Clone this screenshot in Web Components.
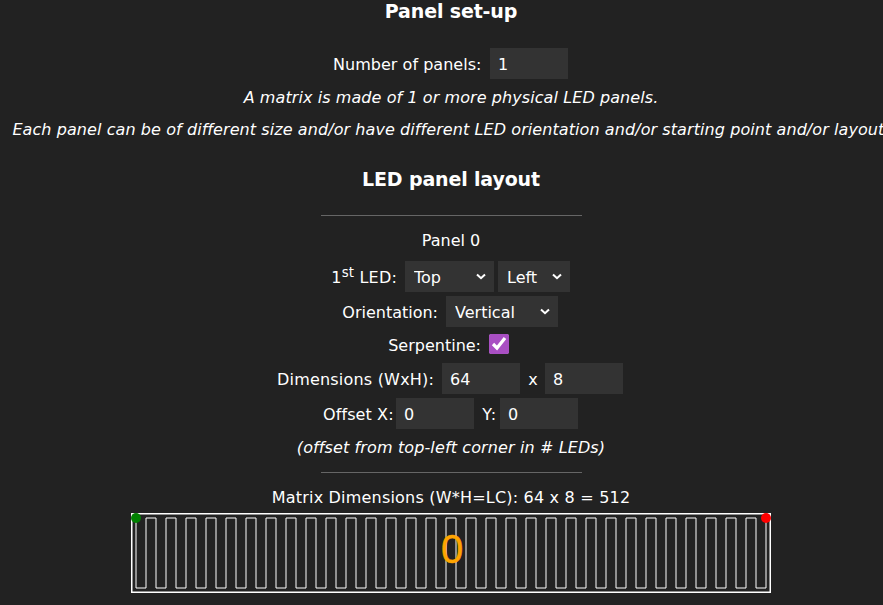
<!DOCTYPE html>
<html>
<head>
<meta charset="utf-8">
<title>Matrix set-up</title>
<style>
  html, body { margin: 0; padding: 0; background: #222; overflow: hidden; }
  body { color: #fff; font-family: "DejaVu Sans", Verdana, sans-serif; font-size: 16px; }
</style>
</head>
<body>
<matrix-page></matrix-page>

<script>
// shared control styles, every shadow root needs its own copy
const controlCss = `
  input[type=number] {
    background: #333;
    color: #fff;
    border: 0;
    border-radius: 0;
    font: inherit;
    margin: 2px;
    width: 78px;
    height: 31px;
    padding: 2px 8px 0;
    box-sizing: border-box;
    outline: none;
  }
  .lbl { display: block; text-align: right; padding-top: 2px; white-space: nowrap; flex: none; }
`;

// one centered line of label + controls
class FormRow extends HTMLElement {
  constructor() {
    super();
    this.attachShadow({ mode: 'open' });
    this.shadowRoot.innerHTML = `
      <style>
        :host { display: flex; justify-content: center; align-items: center; height: 35px; white-space: nowrap; }
      </style>
      <slot></slot>
    `;
  }
}

class DropSelect extends HTMLElement {
  constructor() {
    super();
    this.attachShadow({ mode: 'open' });
    const w = this.getAttribute('width');
    const options = this.getAttribute('options').split(',');
    this.shadowRoot.innerHTML = `
      <style>
        :host { display: block; position: relative; margin: 2px; height: 31px; width: ${w}px; flex: none; }
        select {
          appearance: none;
          display: block;
          width: 100%;
          height: 100%;
          background: #333;
          color: #fff;
          border: 0;
          border-radius: 0;
          padding: 2px 0 0 9px;
          font: inherit;
          outline: none;
        }
        svg { position: absolute; right: 8px; top: 12px; pointer-events: none; }
      </style>
      <select>${options.map(o => `<option>${o}</option>`).join('')}</select>
      <svg width="10" height="7" viewBox="0 0 10 7">
        <polyline points="1,1.4 5,5.2 9,1.4" fill="none" stroke="#fff" stroke-width="2"/>
      </svg>
    `;
  }
}

class PanelSetup extends HTMLElement {
  constructor() {
    super();
    this.attachShadow({ mode: 'open' });
    this.shadowRoot.innerHTML = `
      <style>
        ${controlCss}
        :host { display: block; text-align: center; }
        h2 { font-size: 19px; line-height: 23px; margin: 0; padding-bottom: 23px; letter-spacing: -0.15px; }
        p { margin: 0; font-style: italic; height: 32px; line-height: 34px; white-space: nowrap; letter-spacing: 0.08px; }
      </style>
      <h2>Panel set-up</h2>
      <form-row style="padding-left:1px">
        <span class="lbl" style="width:148px;margin-right:7px;letter-spacing:.03px">Number of panels:</span>
        <input type="number" value="1">
      </form-row>
      <p>A matrix is made of 1 or more physical LED panels.</p>
      <p>Each panel can be of different size and/or have different LED orientation and/or starting point and/or layout.</p>
    `;
  }
}

class LedPanel extends HTMLElement {
  constructor() {
    super();
    this.attachShadow({ mode: 'open' });
    this.shadowRoot.innerHTML = `
      <style>
        ${controlCss}
        :host { display: block; text-align: center; }
        h3 { font-size: 19px; line-height: 23px; margin: 0; padding: 23px 0 24px; letter-spacing: -0.15px; }
        hr { width: 261px; height: 1px; border: 0; background: #666; margin: 0 auto; }
        .title { height: 43px; line-height: 50px; }
        sup { font-size: 13.3px; line-height: 0; }
        input[type=checkbox] { width: 20px; height: 20px; margin: 0 5px 2px 8px; accent-color: #a94fc3; flex: none; }
        .note { font-style: italic; height: 41px; line-height: 33px; letter-spacing: 0.12px; }
      </style>
      <h3>LED panel layout</h3>
      <hr>
      <div class="title">Panel 0</div>
      <form-row style="padding-left:1px">
        <span class="lbl" style="width:66px;margin-right:6px;letter-spacing:.2px">1<sup>st</sup> LED:</span>
        <drop-select width="89" options="Top,Bottom"></drop-select>
        <drop-select width="72" options="Left,Right"></drop-select>
      </form-row>
      <form-row>
        <span class="lbl" style="width:96px;margin-right:6px">Orientation:</span>
        <drop-select width="112" options="Vertical,Horizontal"></drop-select>
      </form-row>
      <form-row style="height:32px">
        <span class="lbl" style="width:93px;padding-top:0">Serpentine:</span>
        <input type="checkbox" checked>
      </form-row>
      <form-row>
        <span class="lbl" style="width:157px;margin-right:6px;letter-spacing:.2px">Dimensions (WxH):</span>
        <input type="number" value="64">
        <span class="lbl" style="width:10px;margin:0 5px 0 6px;text-align:center">x</span>
        <input type="number" value="8">
      </form-row>
      <form-row style="padding-left:1px">
        <span class="lbl" style="width:70px;margin-right:1px;letter-spacing:.1px">Offset X:</span>
        <input type="number" value="0">
        <span class="lbl" style="width:15px;margin:0 1px 0 6px;letter-spacing:.8px">Y:</span>
        <input type="number" value="0">
      </form-row>
      <div class="note">(offset from top-left corner in # LEDs)</div>
      <hr>
    `;
  }
}

class MatrixPreview extends HTMLElement {
  constructor() {
    super();
    this.attachShadow({ mode: 'open' });
    this.shadowRoot.innerHTML = `
      <style>
        :host { display: block; text-align: center; }
        .dim { height: 40px; line-height: 50px; letter-spacing: 0.2px; }
        svg { display: block; margin: 0 auto; }
      </style>
      <div class="dim">Matrix Dimensions (W*H=LC): 64 x 8 = 512</div>
      <svg width="640" height="80" viewBox="0 0 640 80">
        <rect x="0.75" y="0.75" width="638.5" height="78.5" fill="none" stroke="#fff" stroke-width="1.5"/>
        <path id="snake" fill="none" stroke="#fff" stroke-width="1"/>
        <circle cx="5" cy="5" r="5" fill="#008000"/>
        <circle cx="635" cy="5" r="5" fill="#f00"/>
        <text x="321" y="50" text-anchor="middle" fill="#ffa500" stroke="#ffa500" stroke-width="0.5" font-family="'Liberation Sans', Arial, sans-serif" font-size="40">0</text>
      </svg>
    `;
    // serpentine through 64 columns of 8 LEDs
    let d = 'M5 5';
    for (let col = 0; col < 64; col++) {
      const x = col * 10 + 5;
      if (col > 0) d += ` L${x} ${col % 2 ? 75 : 5}`;
      d += ` L${x} ${col % 2 ? 5 : 75}`;
    }
    this.shadowRoot.getElementById('snake').setAttribute('d', d);
  }
}

class MatrixPage extends HTMLElement {
  constructor() {
    super();
    this.attachShadow({ mode: 'open' });
    this.shadowRoot.innerHTML = `
      <style>
        :host { display: block; width: 902px; }
      </style>
      <panel-setup></panel-setup>
      <led-panel></led-panel>
      <matrix-preview></matrix-preview>
    `;
  }
}

customElements.define('form-row', FormRow);
customElements.define('drop-select', DropSelect);
customElements.define('panel-setup', PanelSetup);
customElements.define('led-panel', LedPanel);
customElements.define('matrix-preview', MatrixPreview);
customElements.define('matrix-page', MatrixPage);
</script>
</body>
</html>
